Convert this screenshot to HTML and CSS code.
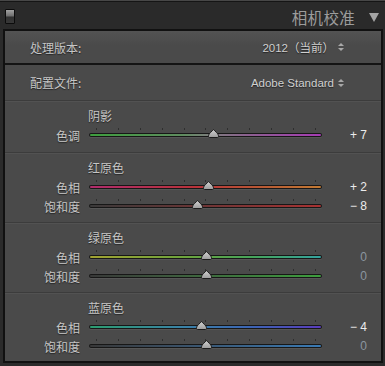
FILE: index.html
```html
<!DOCTYPE html>
<html lang="zh">
<head>
<meta charset="utf-8">
<title>相机校准</title>
<link rel="stylesheet" href="styles.css">
</head>
<body>
<svg class="defs" width="0" height="0" aria-hidden="true">
  <defs>
    <linearGradient id="thumbGrad" x1="0" y1="0" x2="0" y2="1">
      <stop offset="0" stop-color="#d2d2d2"/>
      <stop offset="1" stop-color="#9c9c9c"/>
    </linearGradient>
    <symbol id="thumb" viewBox="0 0 11 9">
      <path d="M5.5 0.5 C6.6 2.2 10.5 4.4 10.5 6.8 L10.5 7.4 Q10.5 8.5 9.4 8.5 L1.6 8.5 Q0.5 8.5 0.5 7.4 L0.5 6.8 C0.5 4.4 4.4 2.2 5.5 0.5 Z" fill="url(#thumbGrad)" stroke="#1c1c1c" stroke-width="1"/>
    </symbol>
  </defs>
</svg>

<header class="header">
  <span class="switch"></span>
  <span class="title">相机校准</span>
  <span class="collapse"></span>
</header>

<main class="panel">
  <div class="prow prow-first">
    <span class="plabel">处理版本:</span>
    <span class="pval">2012（当前）</span>
    <span class="updown"><i class="up"></i><i class="down"></i></span>
  </div>
  <div class="prow prow-second">
    <span class="plabel">配置文件:</span>
    <span class="pval">Adobe Standard</span>
    <span class="updown"><i class="up"></i><i class="down"></i></span>
  </div>

  <section class="group group-first">
    <div class="ghead">阴影</div>
    <div class="srow">
      <span class="slabel">色调</span>
      <div class="slider">
        <div class="ticks"><i></i><i></i><i></i><i></i><i></i><i></i><i></i><i></i><i></i><i></i><i></i></div>
        <div class="track"><div class="fill fill-tint"></div></div>
        <svg class="thumb" style="--v:7" viewBox="0 0 11 9"><use href="#thumb"/></svg>
      </div>
      <span class="val">+ 7</span>
    </div>
  </section>

  <section class="group">
    <div class="ghead">红原色</div>
    <div class="srow">
      <span class="slabel">色相</span>
      <div class="slider">
        <div class="ticks"><i></i><i></i><i></i><i></i><i></i><i></i><i></i><i></i><i></i><i></i><i></i></div>
        <div class="track"><div class="fill fill-red-hue"></div></div>
        <svg class="thumb" style="--v:2" viewBox="0 0 11 9"><use href="#thumb"/></svg>
      </div>
      <span class="val">+ 2</span>
    </div>
    <div class="srow">
      <span class="slabel">饱和度</span>
      <div class="slider">
        <div class="ticks"><i></i><i></i><i></i><i></i><i></i><i></i><i></i><i></i><i></i><i></i><i></i></div>
        <div class="track"><div class="fill fill-red-sat"></div></div>
        <svg class="thumb" style="--v:-8" viewBox="0 0 11 9"><use href="#thumb"/></svg>
      </div>
      <span class="val">− 8</span>
    </div>
  </section>

  <section class="group">
    <div class="ghead">绿原色</div>
    <div class="srow">
      <span class="slabel">色相</span>
      <div class="slider">
        <div class="ticks"><i></i><i></i><i></i><i></i><i></i><i></i><i></i><i></i><i></i><i></i><i></i></div>
        <div class="track"><div class="fill fill-green-hue"></div></div>
        <svg class="thumb" style="--v:0" viewBox="0 0 11 9"><use href="#thumb"/></svg>
      </div>
      <span class="val zero">0</span>
    </div>
    <div class="srow">
      <span class="slabel">饱和度</span>
      <div class="slider">
        <div class="ticks"><i></i><i></i><i></i><i></i><i></i><i></i><i></i><i></i><i></i><i></i><i></i></div>
        <div class="track"><div class="fill fill-green-sat"></div></div>
        <svg class="thumb" style="--v:0" viewBox="0 0 11 9"><use href="#thumb"/></svg>
      </div>
      <span class="val zero">0</span>
    </div>
  </section>

  <section class="group group-last">
    <div class="ghead">蓝原色</div>
    <div class="srow">
      <span class="slabel">色相</span>
      <div class="slider">
        <div class="ticks"><i></i><i></i><i></i><i></i><i></i><i></i><i></i><i></i><i></i><i></i><i></i></div>
        <div class="track"><div class="fill fill-blue-hue"></div></div>
        <svg class="thumb" style="--v:-4" viewBox="0 0 11 9"><use href="#thumb"/></svg>
      </div>
      <span class="val">− 4</span>
    </div>
    <div class="srow">
      <span class="slabel">饱和度</span>
      <div class="slider">
        <div class="ticks"><i></i><i></i><i></i><i></i><i></i><i></i><i></i><i></i><i></i><i></i><i></i></div>
        <div class="track"><div class="fill fill-blue-sat"></div></div>
        <svg class="thumb" style="--v:0" viewBox="0 0 11 9"><use href="#thumb"/></svg>
      </div>
      <span class="val zero">0</span>
    </div>
  </section>
</main>
</body>
</html>
```

FILE: styles.css
```css
* { box-sizing: border-box; }

html, body {
  margin: 0;
  padding: 0;
  background: #2b2b2b;
  width: 385px;
  height: 366px;
  overflow: hidden;
  font-family: "Noto Sans CJK SC", "Noto Sans", sans-serif;
}

.defs {
  position: absolute;
  width: 0;
  height: 0;
  overflow: hidden;
}

/* ---------- header ---------- */
.header {
  height: 29px;
  display: flex;
  align-items: center;
  padding: 3px 6px 0 5px;
  border-top: 1px solid #474747;
  box-shadow: inset 0 1px 0 #151515;
  background: #2a2a2a;
}

.switch {
  width: 10px;
  height: 15px;
  border: 1px solid #0c0c0c;
  border-radius: 1px;
  background: linear-gradient(#a2a2a2, #6c6c6c 48%, #303030 52%, #383838);
}

.title {
  margin-left: auto;
  font-size: 15.5px;
  line-height: 18px;
  letter-spacing: 0.3px;
  color: #9c9c9c;
  margin-right: 14px;
  margin-top: 1px;
}

.collapse {
  width: 0;
  height: 0;
  border-left: 5px solid transparent;
  border-right: 5px solid transparent;
  border-top: 9px solid #a4a4a4;
  margin-top: 1px;
}

/* ---------- panel ---------- */
.panel {
  margin: 0 2px 0 3px;
  border: 2px solid #111111;
  background: #4a4a4a;
}

.prow {
  display: flex;
  align-items: center;
  padding: 0 37px 0 25px;
  color: #c6c6c6;
  font-size: 12px;
  text-shadow: 0 1px 1px rgba(0, 0, 0, 0.55);
}

.prow-first {
  height: 34px;
  background: linear-gradient(#535353, #4a4a4a 45%);
  border-bottom: 2px solid #141414;
}

.prow-second {
  height: 35px;
}

.plabel {
  font-size: 12px;
}

.pval {
  margin-left: auto;
  font-family: "Liberation Sans", "Noto Sans CJK SC", sans-serif;
  font-size: 11.5px;
  color: #d0d0d0;
}

.updown {
  display: flex;
  flex-direction: column;
  gap: 2px;
  margin-left: 4px;
}

.updown i {
  display: block;
  width: 0;
  height: 0;
  border-left: 3px solid transparent;
  border-right: 3px solid transparent;
}

.updown .up { border-bottom: 3px solid #a8a8a8; }
.updown .down { border-top: 3px solid #a8a8a8; }

/* ---------- groups ---------- */
.group {
  border-top: 1px solid #3c3c3c;
  box-shadow: inset 0 1px 0 #525252;
  padding: 6px 0 6px;
}

.group-first { padding-bottom: 7px; }
.group-last { padding-bottom: 5px; }

.ghead {
  height: 19px;
  line-height: 17px;
  padding-left: 83px;
  font-size: 12px;
  color: #c6c6c6;
  text-shadow: 0 1px 1px rgba(0, 0, 0, 0.55);
}

.srow {
  height: 19px;
  display: grid;
  grid-template-columns: 75px 233px 36px;
  column-gap: 9px;
  align-items: center;
}

.slabel {
  text-align: right;
  font-size: 12px;
  line-height: 19px;
  color: #c6c6c6;
  text-shadow: 0 1px 1px rgba(0, 0, 0, 0.55);
}

.slider {
  position: relative;
  height: 19px;
  padding-top: 2px;
}

.ticks {
  display: flex;
  justify-content: space-between;
  height: 2px;
  padding: 0 6px 0 7px;
  margin-bottom: 3px;
}

.ticks i {
  display: block;
  width: 1px;
  height: 2px;
  background: #2e2e2e;
}

.track {
  height: 4px;
  padding: 1px;
  border-radius: 2px;
  background: #171717;
  box-shadow: 0 1px 0 rgba(255, 255, 255, 0.07);
}

.fill {
  height: 2px;
  border-radius: 1px;
}

.fill-tint { background: linear-gradient(90deg, #3e9e3e, #5f8c5f 40%, #7d7d7d 52%, #8e5e92 70%, #a63cb4); }
.fill-red-hue { background: linear-gradient(90deg, #b02c6c, #b8323a 45%, #b85a34 75%, #c27a34); }
.fill-red-sat { background: linear-gradient(90deg, #3a3a3a, #5e3636 35%, #a83232); }
.fill-green-hue { background: linear-gradient(90deg, #a2a232, #6ea43c 40%, #46a45a 70%, #34a29e); }
.fill-green-sat { background: linear-gradient(90deg, #383838, #3e5a3e 35%, #3e9e3e); }
.fill-blue-hue { background: linear-gradient(90deg, #2c9c70, #3a82a6 40%, #3c64b4 70%, #5a3cbc); }
.fill-blue-sat { background: linear-gradient(90deg, #383838, #3a4e62 35%, #3a7ab4); }

.thumb {
  position: absolute;
  top: 3px;
  width: 11px;
  height: 9px;
  left: calc(7px + (var(--v) + 100) * 1.1px - 5.5px);
}

.val {
  text-align: right;
  font-family: "Liberation Sans", sans-serif;
  font-size: 12px;
  line-height: 19px;
  color: #ececec;
}

.val.zero {
  color: #8c96a0;
}
```
